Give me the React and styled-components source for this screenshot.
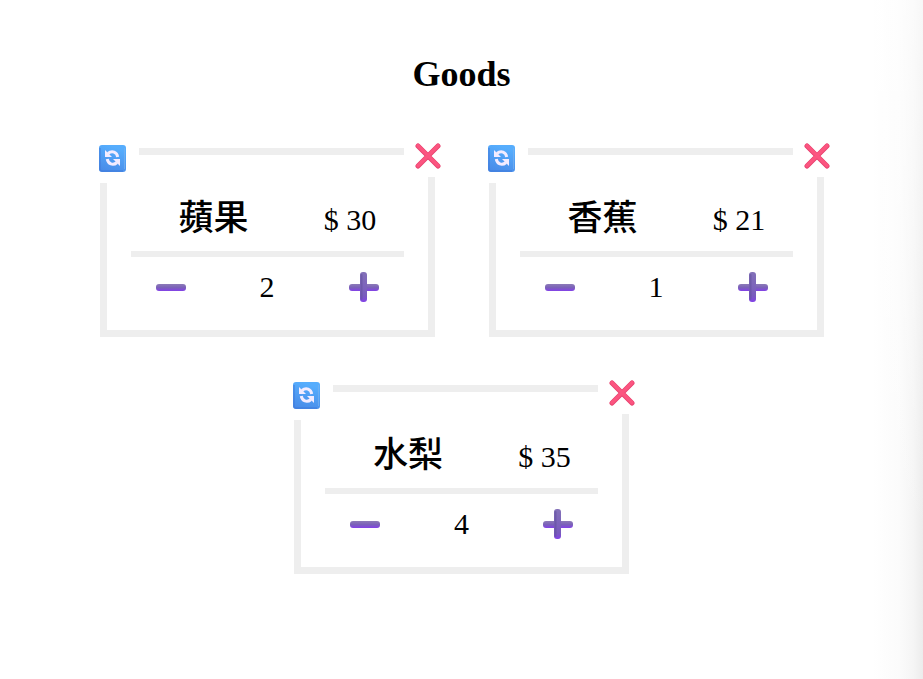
import React, { useId, useState } from "react";
import styled, { createGlobalStyle } from "styled-components";

const GlobalStyle = createGlobalStyle`
  *, *::before, *::after { box-sizing: border-box; }
  body {
    margin: 0;
    min-height: 100vh;
    color: #000;
    font-family: "Liberation Serif", "Noto Sans CJK TC", serif;
    background:
      linear-gradient(to bottom, rgba(255, 255, 255, 0.6), rgba(255, 255, 255, 0) 80%),
      linear-gradient(to left, #ececec 0, #f5f5f5 10px, #fbfbfb 24px, #fff 50px);
  }
`;

const Page = styled.main`
  padding: 53px 24px 48px;
`;

const Title = styled.h1`
  margin: 0 0 53px;
  font-size: 36px;
  line-height: 42px;
  text-align: center;
`;

const GoodsList = styled.ul`
  display: flex;
  flex-wrap: wrap;
  justify-content: center;
  gap: 48px 54px;
  max-width: 800px;
  margin: 0 auto;
  padding: 0;
  list-style: none;
`;

const Card = styled.li`
  position: relative;
  flex: 0 1 335px;
  padding: 34px 24px 25px;
  border: 7px solid #eee;
`;

const IconButton = styled.button`
  display: grid;
  place-items: center;
  padding: 0;
  border: 0;
  background: none;
  cursor: pointer;

  svg { display: block; }
`;

const CornerButton = styled(IconButton)`
  position: absolute;
  background: #fff;
`;

const RefreshButton = styled(CornerButton)`
  top: -21px;
  left: -21px;
  width: 53px;
  height: 49px;
`;

const RemoveButton = styled(CornerButton)`
  top: -20px;
  right: -24px;
  width: 48px;
  height: 42px;
`;

const Summary = styled.div`
  display: grid;
  grid-template-columns: 166fr 107fr;
  align-items: baseline;
  justify-items: center;
  padding-bottom: 10px;
  border-bottom: 6px solid #eee;
`;

const Name = styled.h2`
  margin: 0;
  font: 500 35px/52px "Noto Sans CJK TC", sans-serif;
`;

const Price = styled.span`
  font-size: 30px;
  line-height: 34px;
`;

const Quantity = styled.div`
  display: flex;
  align-items: center;
  justify-content: space-between;
  padding: 12px 25px 0;
`;

const Count = styled.output`
  font-size: 30px;
  line-height: 36px;
`;

function RefreshIcon() {
  const id = useId();
  return (
    <svg width="27" height="27" viewBox="0 0 27 27" aria-hidden="true">
      <defs>
        <linearGradient id={id} x1="0" y1="1" x2="0.3" y2="0">
          <stop offset="0" stopColor="#4788e6" />
          <stop offset="1" stopColor="#56adfd" />
        </linearGradient>
      </defs>
      <rect width="27" height="27" rx="3" fill={`url(#${id})`} />
      <path d="M1 3v21q0 2 2 2h21" fill="none" stroke="#3f78d8" strokeWidth="1.5" opacity=".6" />
      <path d="M25.5 3v21" stroke="#78b1f0" opacity=".7" />
      <g fill="#f3ecff">
        <path d="M6 5v7h7z" />
        <path d="M21 21v-7h-7z" />
      </g>
      <g fill="none" stroke="#f3ecff" strokeWidth="3">
        <path d="M9 8.500C13 5 18 7 18.700 12" />
        <path d="M18 17.500C14 21 9 19 8.300 14" />
      </g>
    </svg>
  );
}

function RemoveIcon() {
  return (
    <svg width="26" height="26" viewBox="0 0 26 26" aria-hidden="true">
      <path d="M3 3l20 20M23 3L3 23" stroke="#e83f6d" strokeWidth="5" strokeLinecap="round" />
      <path d="M3 2.700l20 20M23 2.700L3 22.700" stroke="#fb5580" strokeWidth="3.600" strokeLinecap="round" />
    </svg>
  );
}

function BarGradient({ id }) {
  return (
    <linearGradient id={id} x1="0" y1="0" x2="0" y2="1">
      <stop offset="0" stopColor="#8c7ab8" />
      <stop offset="0.500" stopColor="#7b62b8" />
      <stop offset="1" stopColor="#8341e8" />
    </linearGradient>
  );
}

function MinusIcon() {
  const id = useId();
  return (
    <svg width="30" height="30" viewBox="0 0 30 30" aria-hidden="true">
      <defs><BarGradient id={id} /></defs>
      <rect y="12" width="30" height="7" rx="3" fill={`url(#${id})`} />
    </svg>
  );
}

function PlusIcon() {
  const id = useId();
  return (
    <svg width="30" height="30" viewBox="0 0 30 30" aria-hidden="true">
      <defs>
        <BarGradient id={id} />
        <linearGradient id={`${id}v`} x1="0" y1="0" x2="0" y2="1">
          <stop offset="0" stopColor="#8371b8" />
          <stop offset="0.800" stopColor="#785bbd" />
          <stop offset="1" stopColor="#8341e8" />
        </linearGradient>
      </defs>
      <rect y="12" width="30" height="7" rx="3" fill={`url(#${id})`} />
      <rect x="11" width="7" height="30" rx="3" fill={`url(#${id}v)`} />
      <path d="M12.500 3v24" stroke="#6452a0" strokeWidth="2" strokeLinecap="round" opacity=".6" />
    </svg>
  );
}

const initialGoods = [
  { name: "蘋果", price: 30, count: 2 },
  { name: "香蕉", price: 21, count: 1 },
  { name: "水梨", price: 35, count: 4 },
];

function GoodsCard({ item, onCount, onRemove }) {
  return (
    <Card>
      <RefreshButton type="button" aria-label={`Reset ${item.name}`} onClick={() => onCount(0)}>
        <RefreshIcon />
      </RefreshButton>
      <RemoveButton type="button" aria-label={`Remove ${item.name}`} onClick={onRemove}>
        <RemoveIcon />
      </RemoveButton>
      <Summary>
        <Name lang="zh-Hant">{item.name}</Name>
        <Price>$ {item.price}</Price>
      </Summary>
      <Quantity>
        <IconButton
          type="button"
          aria-label={`Decrease ${item.name}`}
          onClick={() => onCount(Math.max(0, item.count - 1))}
        >
          <MinusIcon />
        </IconButton>
        <Count>{item.count}</Count>
        <IconButton type="button" aria-label={`Increase ${item.name}`} onClick={() => onCount(item.count + 1)}>
          <PlusIcon />
        </IconButton>
      </Quantity>
    </Card>
  );
}

export default function App() {
  const [goods, setGoods] = useState(initialGoods);
  const setCount = (name, count) =>
    setGoods((list) => list.map((item) => (item.name === name ? { ...item, count } : item)));
  const remove = (name) => setGoods((list) => list.filter((item) => item.name !== name));

  return (
    <>
      <GlobalStyle />
      <Page>
        <Title>Goods</Title>
        <GoodsList>
          {goods.map((item) => (
            <GoodsCard
              key={item.name}
              item={item}
              onCount={(count) => setCount(item.name, count)}
              onRemove={() => remove(item.name)}
            />
          ))}
        </GoodsList>
      </Page>
    </>
  );
}
